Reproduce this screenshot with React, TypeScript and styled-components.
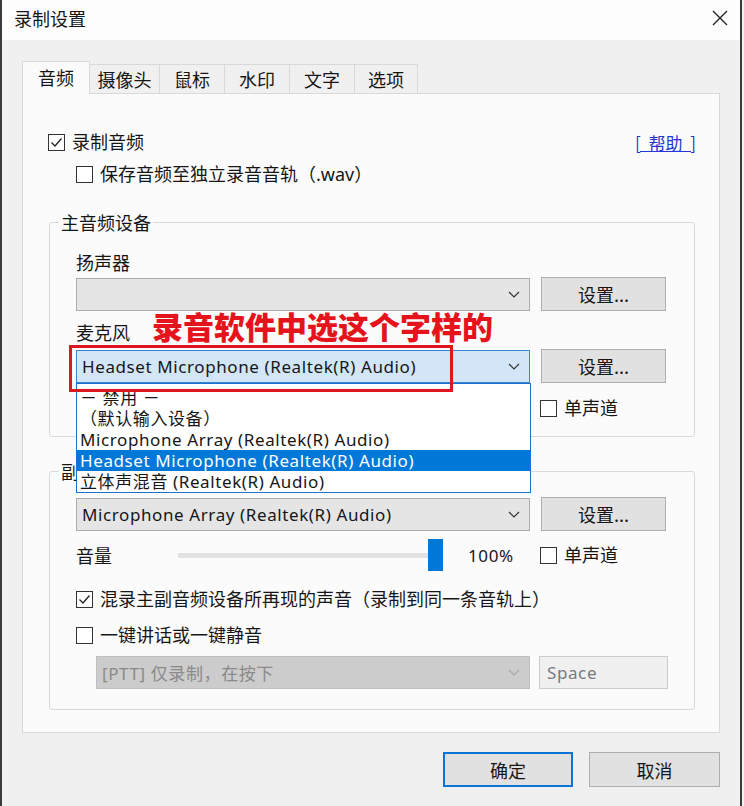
import React from "react";
import styled, { createGlobalStyle } from "styled-components";

const GlobalStyle = createGlobalStyle`
  html, body { margin: 0; padding: 0; background: #f0f0f0; }
  body { font-family: "Noto Sans", "Noto Sans CJK SC", sans-serif; color: #161616; }
  * { box-sizing: border-box; }
`;

const Window = styled.div`
  width: 742px;
  height: 806px;
  display: flex;
  flex-direction: column;
  background: #f0f0f0;
  border-left: 2px solid #3c3c3c;
  border-right: 2px solid #3c3c3c;
`;

const TitleBar = styled.div`
  height: 40px;
  flex: none;
  display: flex;
  align-items: center;
  justify-content: space-between;
  padding: 0 12px 4px 12px;
  background: #fdfdfd;
  font-family: "Noto Sans CJK SC", sans-serif;
  font-size: 18px;
`;

const CloseIcon = () => (
  <svg width="16" height="16" viewBox="0 0 16 16">
    <path d="M1 1 L15 15 M15 1 L1 15" stroke="#222" strokeWidth="1.4" fill="none" />
  </svg>
);

const Body = styled.div`
  flex: 1;
  padding: 21px 20px 0 20px;
  display: flex;
  flex-direction: column;
`;

const TabStrip = styled.div`
  display: flex;
  align-items: flex-end;
  height: 33px;
  margin-bottom: -1px;
  position: relative;
  z-index: 1;
`;

const Tab = styled.div<{ $w: number; $active?: boolean }>`
  width: ${(p) => p.$w}px;
  height: ${(p) => (p.$active ? 33 : 30)}px;
  display: flex;
  align-items: center;
  justify-content: center;
  font-family: "Noto Sans CJK SC", sans-serif;
  font-size: 18px;
  border: 1px solid #d9d9d9;
  border-left-width: ${(p) => (p.$active ? 1 : 0)}px;
  border-bottom: ${(p) => (p.$active ? "none" : "1px solid #d9d9d9")};
  background: ${(p) => (p.$active ? "#fbfbfb" : "#f0f0f0")};
  padding-bottom: ${(p) => (p.$active ? 2 : 0)}px;
`;

const Panel = styled.div`
  height: 640px;
  width: 698px;
  border: 1px solid #d9d9d9;
  background: #fbfbfb;
  padding: 37px 23px 0 25px;
  display: flex;
  flex-direction: column;
`;

const TopRow = styled.div`
  height: 22px;
  display: flex;
  align-items: center;
  justify-content: space-between;
`;

const SubRow = styled.div<{ $mt: number; $pl?: number }>`
  height: 22px;
  display: flex;
  align-items: center;
  margin-top: ${(p) => p.$mt}px;
  padding-left: ${(p) => p.$pl ?? 0}px;
  position: relative;
`;

const HelpLink = styled.a`
  color: #2437d4;
  font-size: 17px;
  text-decoration: underline;
  font-family: "Noto Sans CJK SC", sans-serif;
  white-space: pre;
  word-spacing: 4px;
`;

const CheckLabel = styled.label`
  display: flex;
  align-items: center;
  gap: 7px;
  font-size: 18px;
  line-height: 22px;
  white-space: nowrap;
`;

const Box = styled.span`
  width: 17px;
  height: 17px;
  border: 1px solid #333;
  background: #fff;
  display: inline-flex;
  align-items: center;
  justify-content: center;
  flex: none;
`;

const CheckBox = ({ checked, children }: { checked?: boolean; children: React.ReactNode }) => (
  <CheckLabel>
    <Box>
      {checked && (
        <svg width="13" height="13" viewBox="0 0 13 13">
          <path d="M1.5 6.5 L5 10 L11.5 2.5" stroke="#222" strokeWidth="1.3" fill="none" />
        </svg>
      )}
    </Box>
    <span>{children}</span>
  </CheckLabel>
);

const Group = styled.fieldset<{ $mt: number; $pb: number; $pt: number }>`
  margin: ${(p) => p.$mt}px 0 0 1px;
  width: 646px;
  border: 1px solid #dadada;
  border-radius: 3px;
  padding: ${(p) => p.$pt}px 27px ${(p) => p.$pb}px 26px;
  min-width: 0;
`;

const Legend = styled.legend`
  font-size: 18px;
  line-height: 22px;
  padding: 0 2px;
  margin-left: -17px;
  font-family: "Noto Sans CJK SC", sans-serif;
`;

const FieldLabel = styled.div<{ $mt: number }>`
  font-size: 18px;
  line-height: 22px;
  height: 22px;
  margin-top: ${(p) => p.$mt}px;
  position: relative;
`;

const Annotation = styled.div`
  position: absolute;
  left: 76px;
  top: -12px;
  font-family: "Noto Sans CJK SC", sans-serif;
  font-size: 31px;
  line-height: 32px;
  font-weight: 900;
  color: #e5141c;
  white-space: nowrap;
  z-index: 6;
`;

const DeviceRow = styled.div<{ $mt: number; $pl?: number; $gap?: number }>`
  display: flex;
  align-items: center;
  gap: ${(p) => p.$gap ?? 11}px;
  height: 34px;
  margin-top: ${(p) => p.$mt}px;
  padding-left: ${(p) => p.$pl ?? 0}px;
`;

type ComboKind = "normal" | "focus" | "disabled";

const comboBg: Record<ComboKind, string> = {
  normal: "#e5e5e5",
  focus: "#d2e6f8",
  disabled: "#cccccc",
};
const comboBorder: Record<ComboKind, string> = {
  normal: "#adadad",
  focus: "#3a86d3",
  disabled: "#bfbfbf",
};

const ComboWrap = styled.div<{ $w: number }>`
  width: ${(p) => p.$w}px;
  height: 33px;
  position: relative;
  flex: none;
`;

const ComboBox = styled.div<{ $kind: ComboKind }>`
  width: 100%;
  height: 100%;
  display: flex;
  align-items: center;
  justify-content: space-between;
  padding: 1px 9px 0 5px;
  background: ${(p) => comboBg[p.$kind]};
  border: 1px solid ${(p) => comboBorder[p.$kind]};
  color: ${(p) => (p.$kind === "disabled" ? "#8a8a8a" : "#161616")};
  font-size: 17px;
  letter-spacing: 0.6px;
  white-space: nowrap;
`;

const Chevron = ({ color }: { color: string }) => (
  <svg width="12" height="7" viewBox="0 0 12 7">
    <path d="M1 1 L6 6 L11 1" stroke={color} strokeWidth="1.2" fill="none" />
  </svg>
);

const Combo = ({ w, kind, text, children }: { w: number; kind: ComboKind; text: string; children?: React.ReactNode }) => (
  <ComboWrap $w={w}>
    <ComboBox $kind={kind}>
      <span>{text}</span>
      <Chevron color={kind === "disabled" ? "#a8a8a8" : "#333"} />
    </ComboBox>
    {children}
  </ComboWrap>
);

const RedBox = styled.div`
  position: absolute;
  left: -7px;
  top: -5px;
  width: 384px;
  height: 47px;
  border: 3px solid #e0161f;
  z-index: 6;
  pointer-events: none;
`;

const DropList = styled.ul`
  position: absolute;
  left: 0;
  top: 100%;
  width: 455px;
  height: 110px;
  margin: 0;
  padding: 3px 0 0 0;
  list-style: none;
  background: #fff;
  border: 1px solid #1a73d0;
  z-index: 5;
`;

const DropItem = styled.li<{ $sel?: boolean }>`
  height: 21px;
  line-height: 21px;
  padding-left: 3px;
  font-size: 17px;
  letter-spacing: 0.6px;
  white-space: nowrap;
  background: ${(p) => (p.$sel ? "#0078d7" : "transparent")};
  color: ${(p) => (p.$sel ? "#fff" : "#161616")};
`;

const Button = styled.button<{ $w: number; $h: number; $default?: boolean }>`
  width: ${(p) => p.$w}px;
  height: ${(p) => p.$h}px;
  flex: none;
  background: #e1e1e1;
  border: ${(p) => (p.$default ? "2px solid #0a74d6" : "1px solid #adadad")};
  font-family: "Noto Sans CJK SC", sans-serif;
  font-size: 18px;
  color: #161616;
  padding: 0;
`;

const VolLabel = styled.div`
  width: 102px;
  font-size: 18px;
  flex: none;
`;

const Slider = styled.div`
  width: 265px;
  height: 34px;
  position: relative;
  display: flex;
  align-items: center;
  flex: none;
`;

const Track = styled.div`
  width: 262px;
  height: 5px;
  background: #e2e2e2;
`;

const Thumb = styled.div`
  position: absolute;
  right: 0;
  top: 1px;
  width: 15px;
  height: 32px;
  background: #0078d7;
`;

const Percent = styled.div`
  width: 72px;
  margin-left: 25px;
  font-size: 17px;
  letter-spacing: 0.6px;
  flex: none;
`;

const KeyInput = styled.div`
  width: 129px;
  height: 33px;
  border: 1px solid #cccccc;
  background: #f0f0f0;
  color: #7a7a7a;
  font-size: 17px;
  letter-spacing: 0.6px;
  display: flex;
  align-items: center;
  padding: 1px 0 0 7px;
  flex: none;
`;

const ButtonRow = styled.div`
  display: flex;
  justify-content: flex-end;
  gap: 16px;
  margin-top: 19px;
`;

const tabs: [string, number][] = [
  ["音频", 68],
  ["摄像头", 70],
  ["鼠标", 65],
  ["水印", 65],
  ["文字", 65],
  ["选项", 63],
];

export default function App() {
  return (
    <>
      <GlobalStyle />
      <Window>
        <TitleBar>
          <span>录制设置</span>
          <CloseIcon />
        </TitleBar>
        <Body>
          <TabStrip>
            {tabs.map(([t, w], i) => (
              <Tab key={t} $w={w} $active={i === 0}>
                {t}
              </Tab>
            ))}
          </TabStrip>
          <Panel>
            <TopRow>
              <CheckBox checked>录制音频</CheckBox>
              <HelpLink>[ 帮助 ]</HelpLink>
            </TopRow>
            <SubRow $mt={10} $pl={28}>
              <CheckBox>保存音频至独立录音音轨（.wav）</CheckBox>
            </SubRow>

            <Group $mt={26} $pt={19} $pb={17}>
              <Legend>主音频设备</Legend>
              <FieldLabel $mt={0}>扬声器</FieldLabel>
              <DeviceRow $mt={3}>
                <Combo w={454} kind="normal" text="" />
                <Button $w={125} $h={34}>设置...</Button>
              </DeviceRow>
              <FieldLabel $mt={11}>
                麦克风
                <Annotation>录音软件中选这个字样的</Annotation>
              </FieldLabel>
              <DeviceRow $mt={5}>
                <Combo w={454} kind="focus" text="Headset Microphone (Realtek(R) Audio)">
                  <RedBox />
                  <DropList>
                    <DropItem>－ 禁用 －</DropItem>
                    <DropItem>（默认输入设备）</DropItem>
                    <DropItem>Microphone Array (Realtek(R) Audio)</DropItem>
                    <DropItem $sel>Headset Microphone (Realtek(R) Audio)</DropItem>
                    <DropItem>立体声混音 (Realtek(R) Audio)</DropItem>
                  </DropList>
                </Combo>
                <Button $w={125} $h={34}>设置...</Button>
              </DeviceRow>
              <SubRow $mt={14} $pl={464}>
                <CheckBox>单声道</CheckBox>
              </SubRow>
            </Group>

            <Group $mt={23} $pt={15} $pb={20}>
              <Legend>副音频设备</Legend>
              <DeviceRow $mt={0}>
                <Combo w={454} kind="normal" text="Microphone Array (Realtek(R) Audio)" />
                <Button $w={125} $h={34}>设置...</Button>
              </DeviceRow>
              <DeviceRow $mt={7} $gap={0}>
                <VolLabel>音量</VolLabel>
                <Slider>
                  <Track />
                  <Thumb />
                </Slider>
                <Percent>100%</Percent>
                <CheckBox>单声道</CheckBox>
              </DeviceRow>
              <SubRow $mt={16}>
                <CheckBox checked>混录主副音频设备所再现的声音（录制到同一条音轨上）</CheckBox>
              </SubRow>
              <SubRow $mt={14}>
                <CheckBox>一键讲话或一键静音</CheckBox>
              </SubRow>
              <DeviceRow $mt={9} $pl={20} $gap={9}>
                <Combo w={434} kind="disabled" text="[PTT] 仅录制，在按下" />
                <KeyInput>Space</KeyInput>
              </DeviceRow>
            </Group>
          </Panel>
          <ButtonRow>
            <Button $w={130} $h={35} $default>确定</Button>
            <Button $w={131} $h={35}>取消</Button>
          </ButtonRow>
        </Body>
      </Window>
    </>
  );
}
